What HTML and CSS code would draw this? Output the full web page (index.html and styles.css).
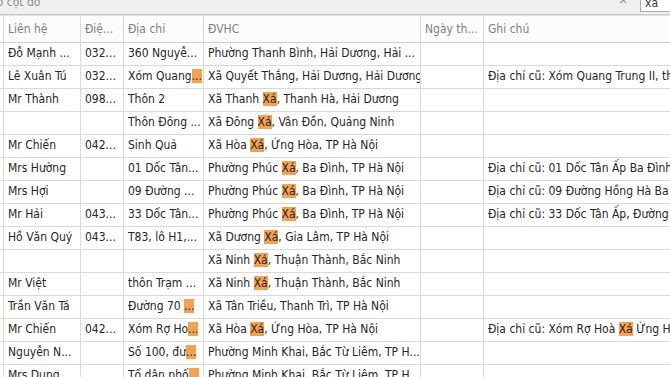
FILE: index.html
```html
<!DOCTYPE html>
<html lang="vi">
<head>
<meta charset="utf-8">
<link rel="stylesheet" href="styles.css">
</head>
<body>
<div class="page">
  <div class="groupbar">
    <div class="grouptext">theo cột đó</div>
    <div class="findbox">
      <span class="clear">×</span>
      <div class="search">xá</div>
    </div>
  </div>
  <div class="grid">
    <div class="c hd ind"></div><div class="c hd">Liên hệ</div><div class="c hd">Điệ...</div><div class="c hd">Địa chỉ</div><div class="c hd">ĐVHC</div><div class="c hd">Ngày th...</div><div class="c hd">Ghi chú</div>

    <div class="c ind"></div><div class="c">Đỗ Mạnh ...</div><div class="c">032...</div><div class="c">360 Nguyễ...</div><div class="c">Phường Thanh Bình, Hải Dương, Hải ...</div><div class="c"></div><div class="c"></div>

    <div class="c ind"></div><div class="c">Lê Xuân Tú</div><div class="c">032...</div><div class="c">Xóm Quang<span class="hl">...</span></div><div class="c">Xã Quyết Thắng, Hải Dương, Hải Dương</div><div class="c"></div><div class="c">Địa chỉ cũ: Xóm Quang Trung II, thị trấn</div>

    <div class="c ind"></div><div class="c">Mr Thành</div><div class="c">098...</div><div class="c">Thôn 2</div><div class="c">Xã Thanh <span class="hl">Xá</span>, Thanh Hà, Hải Dương</div><div class="c"></div><div class="c"></div>

    <div class="c ind"></div><div class="c"></div><div class="c"></div><div class="c">Thôn Đông ...</div><div class="c">Xã Đông <span class="hl">Xá</span>, Vân Đồn, Quảng Ninh</div><div class="c"></div><div class="c"></div>

    <div class="c ind"></div><div class="c">Mr Chiến</div><div class="c">042...</div><div class="c">Sinh Quả</div><div class="c">Xã Hòa <span class="hl">Xá</span>, Ứng Hòa, TP Hà Nội</div><div class="c"></div><div class="c"></div>

    <div class="c ind"></div><div class="c">Mrs Hường</div><div class="c"></div><div class="c">01 Dốc Tân...</div><div class="c">Phường Phúc <span class="hl">Xá</span>, Ba Đình, TP Hà Nội</div><div class="c"></div><div class="c">Địa chỉ cũ: 01 Dốc Tân Ấp  Ba Đình</div>

    <div class="c ind"></div><div class="c">Mrs Hợi</div><div class="c"></div><div class="c">09 Đường ...</div><div class="c">Phường Phúc <span class="hl">Xá</span>, Ba Đình, TP Hà Nội</div><div class="c"></div><div class="c">Địa chỉ cũ: 09 Đường Hồng Hà  Ba Đình</div>

    <div class="c ind"></div><div class="c">Mr Hải</div><div class="c">043...</div><div class="c">33 Dốc Tân...</div><div class="c">Phường Phúc <span class="hl">Xá</span>, Ba Đình, TP Hà Nội</div><div class="c"></div><div class="c">Địa chỉ cũ: 33 Dốc Tân Ấp, Đường Hồng Hà</div>

    <div class="c ind"></div><div class="c">Hồ Văn Quý</div><div class="c">043...</div><div class="c">T83, lô H1,...</div><div class="c">Xã Dương <span class="hl">Xá</span>, Gia Lâm, TP Hà Nội</div><div class="c"></div><div class="c"></div>

    <div class="c ind"></div><div class="c"></div><div class="c"></div><div class="c"></div><div class="c">Xã Ninh <span class="hl">Xá</span>, Thuận Thành, Bắc Ninh</div><div class="c"></div><div class="c"></div>

    <div class="c ind"></div><div class="c">Mr Việt</div><div class="c"></div><div class="c">thôn Trạm ...</div><div class="c">Xã Ninh <span class="hl">Xá</span>, Thuận Thành, Bắc Ninh</div><div class="c"></div><div class="c"></div>

    <div class="c ind"></div><div class="c">Trần Văn Tá</div><div class="c"></div><div class="c">Đường 70 <span class="hl">...</span></div><div class="c">Xã Tân Triều, Thanh Trì, TP Hà Nội</div><div class="c"></div><div class="c"></div>

    <div class="c ind"></div><div class="c">Mr Chiến</div><div class="c">042...</div><div class="c">Xóm Rợ Ho<span class="hl">...</span></div><div class="c">Xã Hòa <span class="hl">Xá</span>, Ứng Hòa, TP Hà Nội</div><div class="c"></div><div class="c">Địa chỉ cũ: Xóm Rợ Hoà <span class="hl">Xá</span>  Ứng Hòa</div>

    <div class="c ind"></div><div class="c">Nguyễn N...</div><div class="c"></div><div class="c">Số 100, đư<span class="hl">...</span></div><div class="c">Phường Minh Khai, Bắc Từ Liêm, TP H...</div><div class="c"></div><div class="c"></div>

    <div class="c ind"></div><div class="c">Mrs Dung</div><div class="c"></div><div class="c">Tổ dân phố<span class="hl">...</span></div><div class="c">Phường Minh Khai, Bắc Từ Liêm, TP H...</div><div class="c"></div><div class="c"></div>
  </div>
</div>
</body>
</html>
```

FILE: styles.css
```css
html, body {
  margin: 0;
  padding: 0;
  background: #ffffff;
}
.page {
  width: 670px;
  height: 377px;
  overflow: hidden;
  font-family: "DejaVu Sans Condensed", "DejaVu Sans", sans-serif;
  font-size: 12px;
  color: #262626;
}
.groupbar {
  height: 14px;
  background: #f0f0f0;
  border-bottom: 1px solid #c8c8c8;
  display: flex;
  justify-content: space-between;
  align-items: flex-start;
  overflow: hidden;
}
.grouptext {
  margin-top: -6px;
  margin-left: -21px;
  color: #8a8a8a;
  line-height: 16px;
}
.findbox {
  display: flex;
  align-items: flex-start;
  gap: 12px;
}
.clear {
  margin-top: -8px;
  color: #888;
  font-size: 13px;
  line-height: 16px;
}
.search {
  width: 40px;
  height: 18px;
  margin-top: -6px;
  background: #fff;
  border: 1px solid #a9a9a9;
  box-sizing: border-box;
  padding-left: 4px;
  color: #333;
  line-height: 16px;
  margin-right: -10px;
}
.grid {
  display: grid;
  grid-template-columns: 4px 77px 43px 80px 217px 63px 300px;
  grid-template-rows: 27px;
  grid-auto-rows: 23px;
  border-top: 1px solid #e2e2e2;
}
.c {
  box-sizing: border-box;
  border-right: 1px solid #d9d9d9;
  border-bottom: 1px solid #d9d9d9;
  padding: 0 3px 0 4px;
  white-space: nowrap;
  overflow: hidden;
  line-height: 21px;
}
.c.ind {
  padding: 0;
}
.hd {
  color: #808080;
  background: #fcfcfc;
  line-height: 27px;
  border-bottom-color: #cfcfcf;
}
.hl {
  background: #f5a24e;
}
```
